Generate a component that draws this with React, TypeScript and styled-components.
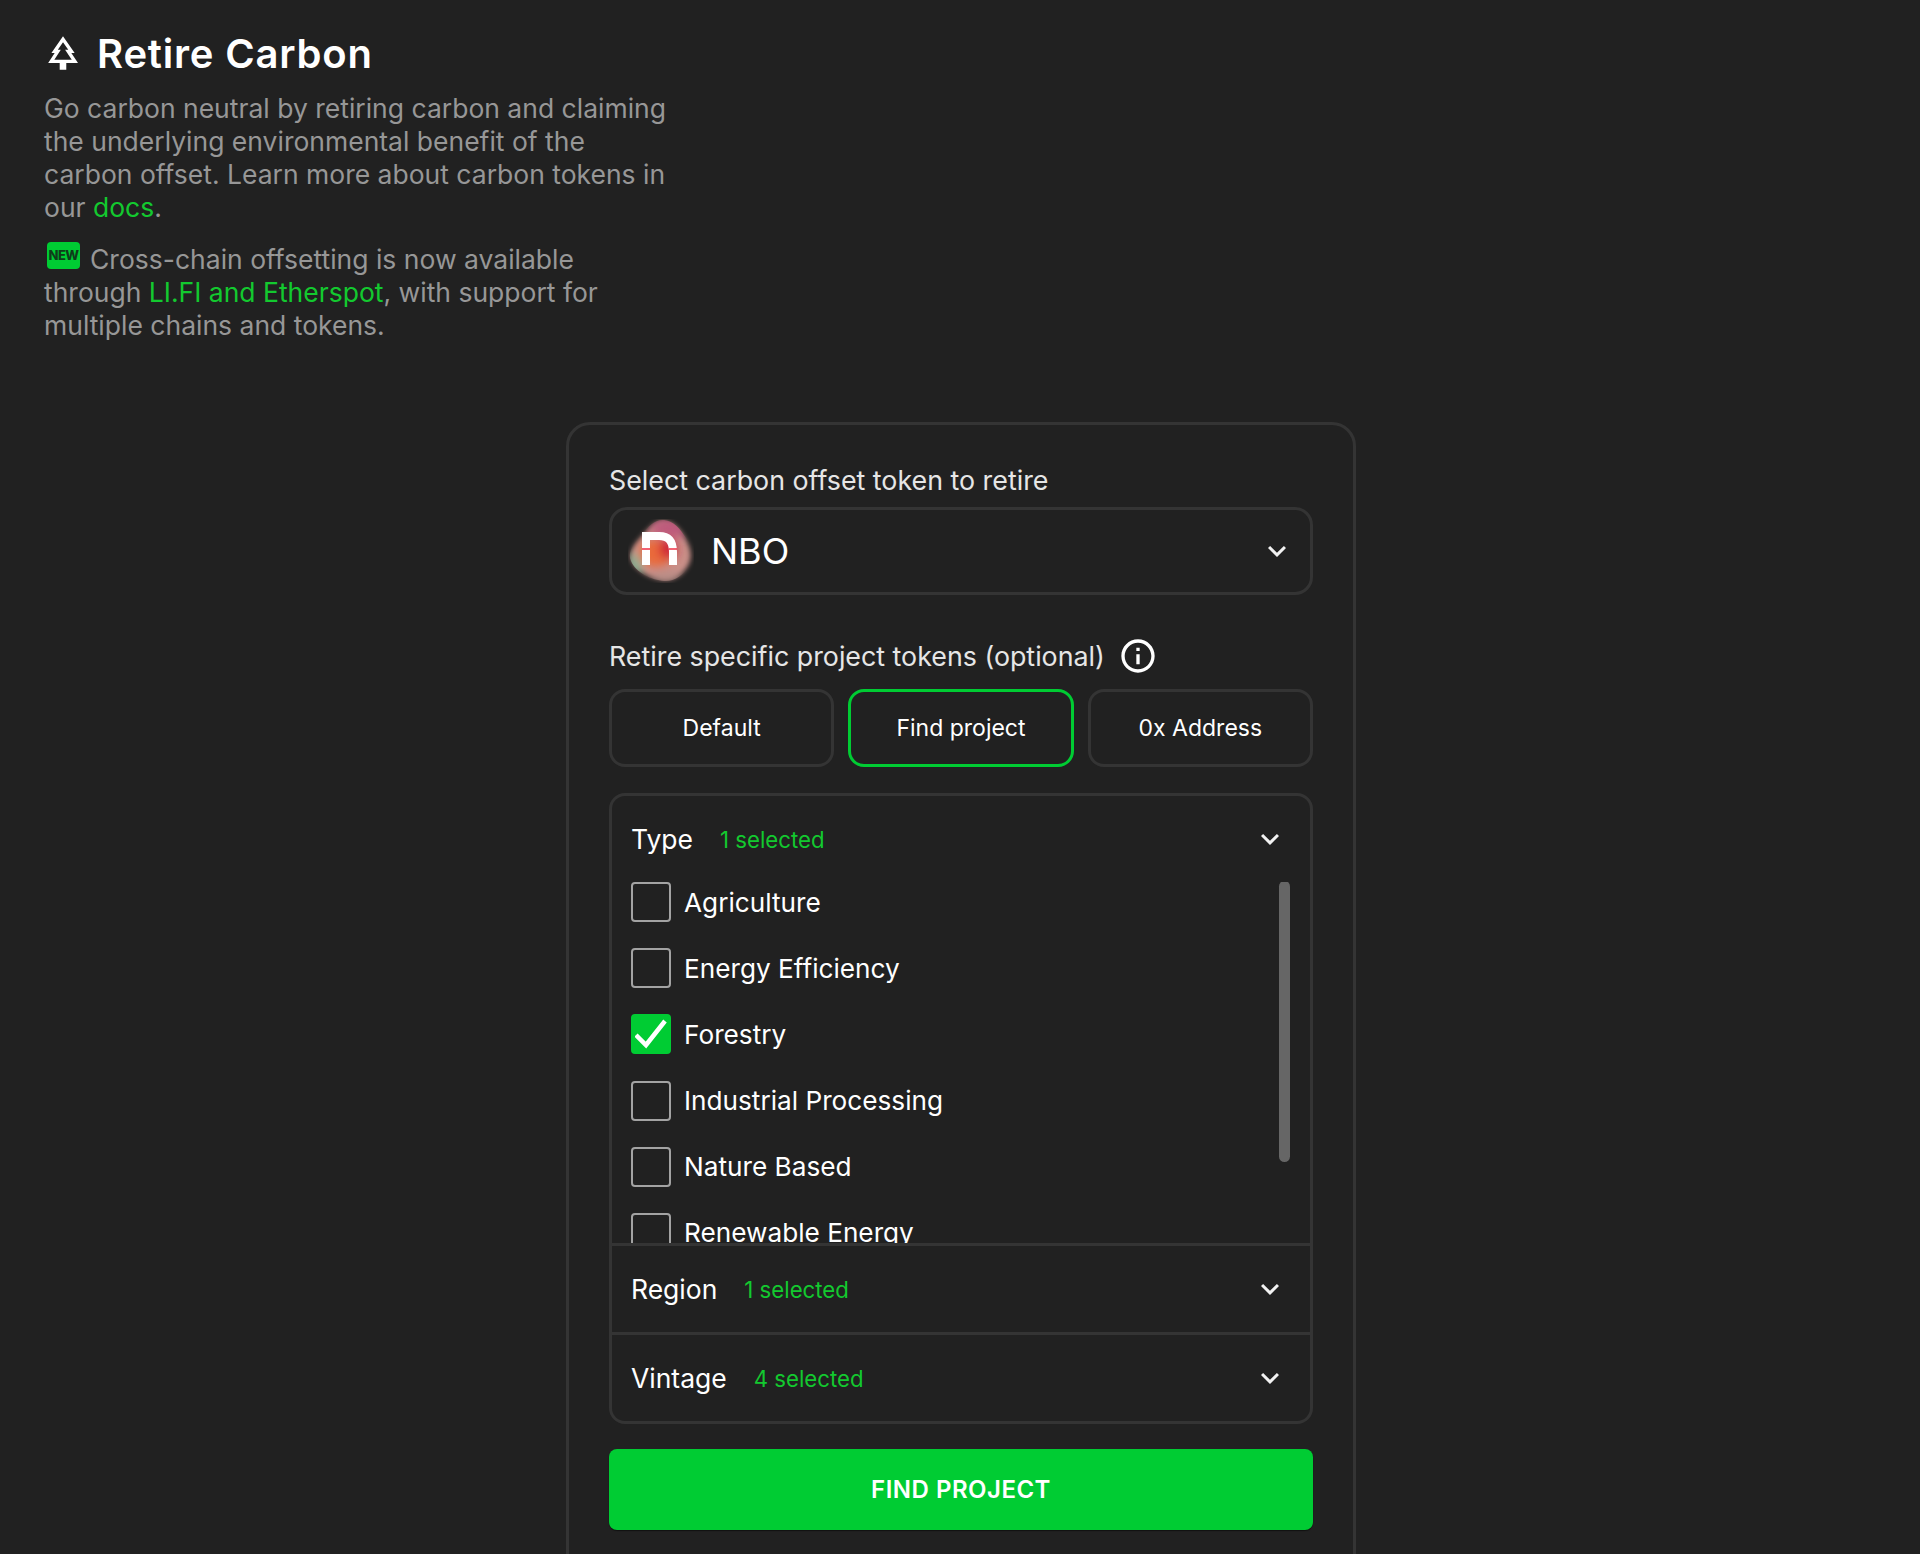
import React from 'react';
import styled, { createGlobalStyle } from 'styled-components';
import { MdOutlinePark, MdKeyboardArrowDown, MdOutlineInfo } from 'react-icons/md';

const green = '#00cc33';
const linkGreen = '#13c92f';
const line = '#343434';

const GlobalStyle = createGlobalStyle`
  html, body {
    margin: 0;
    padding: 0;
    background: #212121;
  }
  * {
    box-sizing: border-box;
  }
`;

const Page = styled.div`
  height: 1554px;
  overflow: hidden;
  padding-left: 2px;
  background: #212121;
  color: #fff;
  font-family: Inter, 'Liberation Sans', sans-serif;
`;

const Intro = styled.header`
  width: 626px;
  margin-left: 42px;
  padding-top: 29px;
`;

const TitleRow = styled.div`
  display: flex;
  align-items: center;
  gap: 14px;
  height: 48px;
  margin-left: -1px;
  margin-bottom: 15px;
  svg {
    flex: none;
    width: 40px;
    height: 40px;
  }
`;

const Title = styled.h1`
  margin: 0;
  font-size: 40px;
  font-weight: 600;
  letter-spacing: 0.8px;
`;

const Paragraph = styled.p`
  margin: 0 0 19px;
  font-size: 26.5px;
  line-height: 33px;
  color: #979797;
`;

const Link = styled.span`
  color: ${linkGreen};
`;

const NewBadge = styled.span`
  display: inline-flex;
  align-items: center;
  justify-content: center;
  vertical-align: 9px;
  width: 33px;
  height: 27px;
  margin: -12px 10px -12px 3px;
  border-radius: 4px;
  background: ${green};
  color: #0e3d1a;
  font-size: 13px;
  line-height: 1;
  font-weight: 800;
  letter-spacing: -0.6px;
`;

const Card = styled.main`
  width: 790px;
  margin: 0 auto;
  margin-top: 80px;
  padding: 38px 40px 60px;
  border: 3px solid ${line};
  border-radius: 24px;
`;

const FieldLabel = styled.div`
  display: flex;
  align-items: center;
  gap: 13px;
  height: 34px;
  font-size: 26.8px;
  color: #e6e6e6;
`;

const TokenSelect = styled.div`
  display: flex;
  align-items: center;
  height: 88px;
  margin: 10px 0 44px;
  padding: 0 15px 0 16px;
  border: 3px solid ${line};
  border-radius: 18px;
`;

const TokenName = styled.span`
  flex: 1;
  margin-left: 17px;
  font-size: 36px;
`;

const Chevron = styled(MdKeyboardArrowDown)`
  flex: none;
  width: 36px;
  height: 36px;
  color: #f2f2f2;
`;

const Modes = styled.div`
  display: grid;
  grid-template-columns: repeat(3, 1fr);
  gap: 14px;
  margin: 16px 0 26px;
`;

const ModeButton = styled.div<{ $active?: boolean }>`
  display: flex;
  align-items: center;
  justify-content: center;
  height: 78px;
  border: 3px solid ${(props) => (props.$active ? green : line)};
  border-radius: 16px;
  font-size: 23px;
`;

const Filters = styled.section`
  border: 3px solid ${line};
  border-radius: 16px;
  overflow: hidden;
`;

const FilterHeader = styled.div<{ $bordered?: boolean }>`
  display: flex;
  align-items: center;
  height: ${(props) => (props.$bordered ? '89px' : '86px')};
  padding: 0 22px 0 19px;
  border-top: ${(props) => (props.$bordered ? `3px solid ${line}` : 'none')};
`;

const FilterName = styled.span`
  font-size: 26.5px;
`;

const FilterCount = styled.span`
  flex: 1;
  margin-left: 27px;
  font-size: 22.2px;
  color: ${linkGreen};
`;

const OptionList = styled.div`
  position: relative;
  height: 361px;
  overflow: hidden;
  padding: 0 19px;
`;

const Option = styled.div`
  display: flex;
  align-items: center;
  gap: 13px;
  height: 40px;
  margin-bottom: 26.2px;
  font-size: 26.2px;
`;

const Box = styled.span<{ $checked?: boolean }>`
  display: flex;
  align-items: center;
  justify-content: center;
  flex: none;
  width: 40px;
  height: 40px;
  border: 2px solid ${(props) => (props.$checked ? green : '#a3a3a3')};
  border-radius: 4px;
  background: ${(props) => (props.$checked ? green : 'transparent')};
`;

const ScrollThumb = styled.div`
  position: absolute;
  top: -1px;
  right: 20px;
  width: 11px;
  height: 281px;
  border-radius: 6px;
  background: #666;
`;

const SubmitButton = styled.div`
  display: flex;
  align-items: center;
  justify-content: center;
  height: 81px;
  margin-top: 25px;
  border-radius: 8px;
  background: ${green};
  box-shadow: 0 1px 1px #111;
  font-size: 24px;
  font-weight: 600;
  letter-spacing: 0.5px;
`;

function TokenLogo() {
  return (
    <svg width='66' height='64' viewBox='0 0 66 64'>
      <defs>
        <filter id='soft' x='-30%' y='-30%' width='160%' height='160%'>
          <feGaussianBlur stdDeviation='2.8' />
        </filter>
        <filter id='softer' x='-50%' y='-50%' width='200%' height='200%'>
          <feGaussianBlur stdDeviation='5' />
        </filter>
        <clipPath id='blob'>
          <path d='M36 1C46 2 52 10 58 19C65 29 66 38 61 47C55 57 45 63 36 62C24 61 8 54 3 42C-1 33 6 24 14 15C21 7 27 0 36 1Z' />
        </clipPath>
      </defs>
      <g filter='url(#soft)'>
        <path
          d='M36 2C46 3 52 10 57 19C63 29 65 38 60 47C54 56 45 62 36 61C25 60 9 53 4 42C0 33 7 24 15 16C22 8 28 1 36 2Z'
          fill='#c98f88'
        />
      </g>
      <g clipPath='url(#blob)'>
        <g filter='url(#softer)'>
          <ellipse cx='42' cy='9' rx='20' ry='10' fill='#bd5a7c' />
          <ellipse cx='7' cy='46' rx='8' ry='12' fill='#8fae93' />
          <ellipse cx='38' cy='58' rx='17' ry='5' fill='#b58d86' />
          <ellipse cx='28' cy='34' rx='17' ry='14' fill='#ea6a3a' />
          <ellipse cx='40' cy='30' rx='9' ry='10' fill='#cf2038' />
        </g>
      </g>
      <path
        d='M18 46V17H31C41 17 45 23 45 33V46'
        fill='none'
        stroke='#fff'
        strokeWidth='8'
      />
      <path d='M14 30H22M41 30H49' stroke='#f03045' strokeWidth='1.5' />
    </svg>
  );
}

function Check() {
  return (
    <svg width='32' height='32' viewBox='0 0 32 32'>
      <path d='M1 17L11 27L30 3' fill='none' stroke='#fff' strokeWidth='4.5' />
    </svg>
  );
}

const types = [
  { name: 'Agriculture' },
  { name: 'Energy Efficiency' },
  { name: 'Forestry', checked: true },
  { name: 'Industrial Processing' },
  { name: 'Nature Based' },
  { name: 'Renewable Energy' },
];

function App() {
  return (
    <Page>
      <GlobalStyle />
      <Intro>
        <TitleRow>
          <MdOutlinePark />
          <Title>Retire Carbon</Title>
        </TitleRow>
        <Paragraph>
          Go carbon neutral by retiring carbon and claiming the underlying environmental benefit of
          the carbon offset. Learn more about carbon tokens in our <Link>docs</Link>.
        </Paragraph>
        <Paragraph>
          <NewBadge>NEW</NewBadge>
          Cross-chain offsetting is now available through <Link>LI.FI and Etherspot</Link>, with
          support for multiple chains and tokens.
        </Paragraph>
      </Intro>
      <Card>
        <FieldLabel>Select carbon offset token to retire</FieldLabel>
        <TokenSelect>
          <TokenLogo />
          <TokenName>NBO</TokenName>
          <Chevron />
        </TokenSelect>
        <FieldLabel>
          Retire specific project tokens (optional)
          <MdOutlineInfo size={40} color='#fff' />
        </FieldLabel>
        <Modes>
          <ModeButton>Default</ModeButton>
          <ModeButton $active>Find project</ModeButton>
          <ModeButton>0x Address</ModeButton>
        </Modes>
        <Filters>
          <FilterHeader>
            <FilterName>Type</FilterName>
            <FilterCount>1 selected</FilterCount>
            <Chevron />
          </FilterHeader>
          <OptionList>
            {types.map((type) => (
              <Option key={type.name}>
                <Box $checked={type.checked}>{type.checked && <Check />}</Box>
                {type.name}
              </Option>
            ))}
            <ScrollThumb />
          </OptionList>
          <FilterHeader $bordered>
            <FilterName>Region</FilterName>
            <FilterCount>1 selected</FilterCount>
            <Chevron />
          </FilterHeader>
          <FilterHeader $bordered>
            <FilterName>Vintage</FilterName>
            <FilterCount>4 selected</FilterCount>
            <Chevron />
          </FilterHeader>
        </Filters>
        <SubmitButton>FIND PROJECT</SubmitButton>
      </Card>
    </Page>
  );
}

export default App;
